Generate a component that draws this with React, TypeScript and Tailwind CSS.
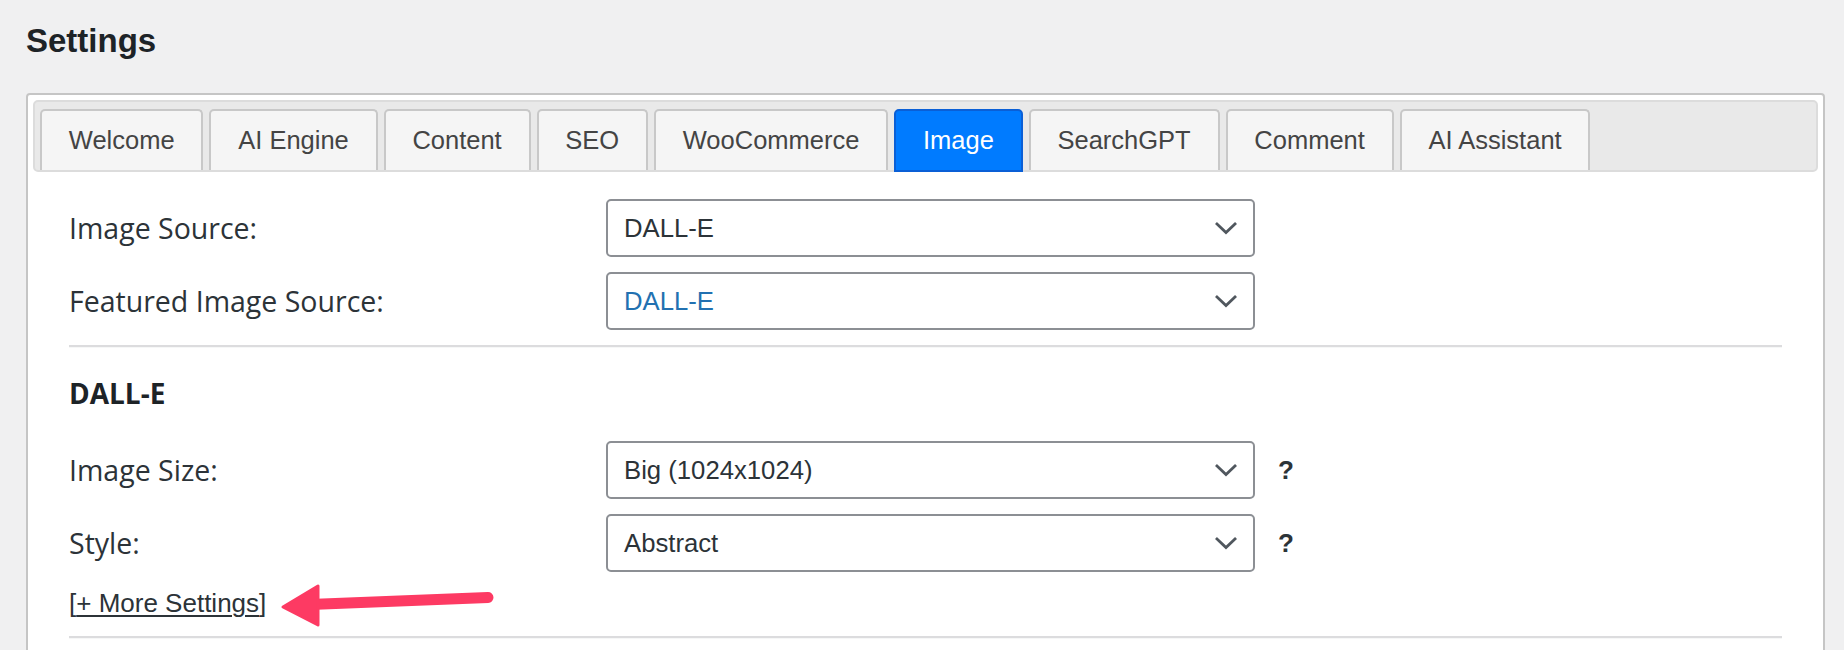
import React from "react";

const tabs = [
  "Welcome",
  "AI Engine",
  "Content",
  "SEO",
  "WooCommerce",
  "Image",
  "SearchGPT",
  "Comment",
  "AI Assistant",
];

function Chevron() {
  return (
    <svg width="22" height="13" viewBox="0 0 22 13" fill="none">
      <path
        d="M2 2 L11 10.5 L20 2"
        stroke="#50575e"
        strokeWidth="2.8"
        strokeLinecap="square"
        strokeLinejoin="miter"
      />
    </svg>
  );
}

function Select({ value, blue }: { value: string; blue?: boolean }) {
  return (
    <div
      className={`flex h-[58px] w-[649px] shrink-0 items-center justify-between rounded-[5px] border-2 border-[#8c8f94] bg-white pl-[16px] pr-[16px] font-['Liberation_Sans',Arial,sans-serif] text-[25.7px] ${
        blue ? "text-[#2271b1]" : "text-[#2c3338]"
      }`}
    >
      <span>{value}</span>
      <Chevron />
    </div>
  );
}

function Row({
  label,
  value,
  blue,
  help,
}: {
  label: string;
  value: string;
  blue?: boolean;
  help?: boolean;
}) {
  return (
    <div className="flex h-[58px] items-center">
      <div className="w-[537px] shrink-0 font-['Open_Sans',sans-serif] text-[28.5px] text-[#2c3338]">
        {label}
      </div>
      <Select value={value} blue={blue} />
      {help && (
        <span className="ml-[23px] font-['Liberation_Sans',Arial,sans-serif] text-[26px] font-bold text-[#2c3338]">
          ?
        </span>
      )}
    </div>
  );
}

function Divider({ className }: { className: string }) {
  return (
    <div
      className={`h-0 border-t-2 border-b border-t-[#dcdcde] border-b-[#f6f7f7] ${className}`}
    />
  );
}

export default function App() {
  return (
    <div className="relative h-[650px] overflow-hidden bg-[#f0f0f1] pl-[26px] pr-[19px] pt-[24px] font-['Liberation_Sans',Arial,sans-serif]">
      <h1 className="text-[33px] font-bold leading-none text-[#1d2327]">
        Settings
      </h1>

      <div className="mt-[36px] rounded-[4px] border-2 border-[#c5c5c5] bg-white p-[5px]">
        <div className="flex gap-[6px] rounded-[5px] border-2 border-[#dcdcdc] bg-[#e9e9e9] px-[5px] pt-[7px]">
          {tabs.map((t) =>
            t === "Image" ? (
              <div
                key={t}
                className="relative z-10 -mb-[2px] flex h-[63px] items-center rounded-t-[5px] border-2 border-[#0a5fd6] bg-[#007bff] px-[26.8px] text-[25.5px] text-white"
              >
                {t}
              </div>
            ) : (
              <div
                key={t}
                className="flex h-[61px] items-center rounded-t-[5px] border-2 border-b-0 border-[#c8c8c8] bg-[#f5f5f5] px-[26.8px] text-[25.5px] text-[#444444]"
              >
                {t}
              </div>
            )
          )}
        </div>

        <div className="px-[36px] pb-[60px] pt-[27px]">
          <div className="flex flex-col gap-[15px]">
            <Row label="Image Source:" value="DALL-E" />
            <Row label="Featured Image Source:" value="DALL-E" blue />
          </div>

          <Divider className="mt-[15px]" />

          <div className="mt-[31px] font-['Open_Sans',sans-serif] text-[28px] font-bold leading-none text-[#1d2327]">
            DALL-E
          </div>

          <div className="mt-[34px] flex flex-col gap-[15px]">
            <Row label="Image Size:" value="Big (1024x1024)" help />
            <Row label="Style:" value="Abstract" help />
          </div>

          <div className="mt-[18px] text-[26px] leading-none text-[#2c3338]">
            [<span className="underline decoration-[1.5px] underline-offset-[3px]">+ More Settings</span>]
          </div>

          <Divider className="mt-[20px]" />
        </div>
      </div>

      <svg
        className="pointer-events-none absolute left-[270px] top-[576px]"
        width="240"
        height="60"
        viewBox="0 0 240 60"
      >
        <line
          x1="40"
          y1="28.5"
          x2="218"
          y2="21.5"
          stroke="#fd3a63"
          strokeWidth="11"
          strokeLinecap="round"
        />
        <polygon
          points="13,31 48,10 48,49"
          fill="#fd3a63"
          stroke="#fd3a63"
          strokeWidth="3"
          strokeLinejoin="round"
        />
      </svg>
    </div>
  );
}
